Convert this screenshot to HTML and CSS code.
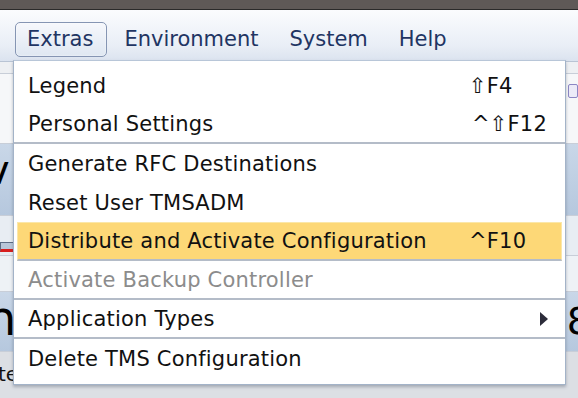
FILE: index.html
```html
<!DOCTYPE html>
<html lang="en">
<head>
  <meta charset="UTF-8">
  <meta name="viewport" content="width=device-width, initial-scale=1.0">
  <title>TMS Extras Menu</title>
  <link rel="stylesheet" href="styles.css">
</head>
<body>
  <div class="titlebar"></div>
  <nav class="menubar">
    <span class="menu-title active">Extras</span>
    <span class="menu-title">Environment</span>
    <span class="menu-title">System</span>
    <span class="menu-title">Help</span>
  </nav>

  <!-- window content behind the open menu -->
  <div class="content">
    <div class="band band-light"></div>
    <div class="band band-white"><span class="edge-icon"></span></div>
    <div class="band band-blue"><span class="big-text">v</span></div>
    <div class="band band-toolbar"><span class="tool-icon"></span></div>
    <div class="band band-white thin"></div>
    <div class="band band-blue tall"><span class="big-text">n</span><span class="big-text">8</span></div>
    <div class="band band-gray"><span class="small-text">te</span></div>
  </div>

  <div class="dropdown" role="menu">
    <div class="item"><span class="label">Legend</span><span class="shortcut">⇧F4</span></div>
    <div class="item sep"><span class="label">Personal Settings</span><span class="shortcut">^⇧F12</span></div>
    <div class="item"><span class="label">Generate RFC Destinations</span></div>
    <div class="item"><span class="label">Reset User TMSADM</span></div>
    <div class="item selected sep"><span class="label">Distribute and Activate Configuration</span><span class="shortcut">^F10</span></div>
    <div class="item disabled sep"><span class="label">Activate Backup Controller</span></div>
    <div class="item sep"><span class="label">Application Types</span><span class="submenu"></span></div>
    <div class="item"><span class="label">Delete TMS Configuration</span></div>
  </div>
</body>
</html>
```

FILE: styles.css
```css
* {
  margin: 0;
  padding: 0;
  box-sizing: border-box;
}
body {
  width: 578px;
  height: 398px;
  overflow: hidden;
  position: relative;
  font-family: 'DejaVu Sans', Verdana, sans-serif;
  background: #e4e8ee;
  color: #111;
}
.titlebar {
  height: 10px;
  background: #5f5957;
  border-bottom: 1px solid #2b2a2a;
}
.menubar {
  height: 52px;
  display: flex;
  align-items: flex-start;
  padding: 12px 0 0 15px;
  gap: 5px;
  background: linear-gradient(#fbfcfe, #e9eef6 70%, #dbe3ef);
  border-bottom: 1px solid #b9c4d4;
}
.menu-title {
  font-size: 21px;
  line-height: 24px;
  color: #1f3563;
  padding: 4px 13px 5px 11px;
  border: 1px solid transparent;
  border-radius: 5px;
}
.menu-title.active {
  border-color: #8595b3;
  background: linear-gradient(#f6f8fc, #dfe7f2);
  box-shadow: inset 0 0 2px rgba(255, 255, 255, 0.9);
}
.content {
  display: flex;
  flex-direction: column;
}
.band {
  display: flex;
  justify-content: space-between;
  align-items: flex-start;
  border-bottom: 1px solid #c8ced8;
  overflow: hidden;
}
.band-light { height: 12px; background: #eef0f3; }
.band-white { height: 70px; background: #f6f7f9; }
.band-white.thin { height: 36px; background: #eef2f6; }
.band-blue {
  height: 72px;
  padding-top: 6px;
  background: linear-gradient(#c9d7e8, #b6c8de);
}
.band-blue.tall { height: 60px; padding-top: 2px; }
.band-toolbar { height: 40px; background: #e8edf3; }
.band-gray { height: 50px; background: #dcdfe4; padding-top: 12px; }
.big-text {
  font-size: 40px;
  line-height: 1;
  color: #000;
  margin-left: -14px;
}
.band-blue.tall .big-text {
  font-size: 48px;
}
.big-text + .big-text {
  margin-left: 0;
  margin-right: -13px;
}
.band-blue.tall .big-text + .big-text {
  font-size: 38px;
  margin-top: 8px;
}
.small-text {
  font-size: 20px;
  line-height: 1;
  margin-left: -2px;
}
.tool-icon {
  width: 14px;
  height: 10px;
  margin-top: 26px;
  background: #b8c6d8;
  border: 1px solid #5c6c84;
  border-bottom: 3px solid #d81e1e;
}
.edge-icon {
  width: 10px;
  height: 14px;
  margin: 10px 0 0 auto;
  border: 1px solid #8c86c4;
  border-radius: 2px;
  background: #ecebf8;
}
.dropdown {
  position: absolute;
  left: 13px;
  top: 60px;
  width: 553px;
  background: #fff;
  border: 1px solid #a3b3c8;
  border-top-color: #b8c6d8;
  box-shadow: 0 2px 3px rgba(60, 70, 90, 0.35);
  padding: 5px 3px 6px;
}
.item {
  display: flex;
  align-items: center;
  height: 39px;
  padding-left: 11px;
  font-size: 21px;
  letter-spacing: 0.2px;
  color: #111;
  white-space: nowrap;
}
.item.sep {
  border-bottom: 2px solid #b4bcc8;
  margin-left: -3px;
  margin-right: -3px;
  padding-left: 14px;
}
.item .label {
  flex: 1;
}
.shortcut {
  width: 93px;
}
.item.selected {
  background: #fdd877;
  border: 1px solid #fbe7a9;
  border-bottom: 2px solid #b4bcc8;
  margin-left: 0;
  margin-right: 0;
  padding-left: 10px;
}
.item.selected .shortcut {
  width: 92px;
}
.item.disabled {
  color: #8c8c8c;
}
.submenu {
  width: 0;
  height: 0;
  border-top: 7px solid transparent;
  border-bottom: 7px solid transparent;
  border-left: 8px solid #2c2c3a;
  margin-right: 17px;
}
```
